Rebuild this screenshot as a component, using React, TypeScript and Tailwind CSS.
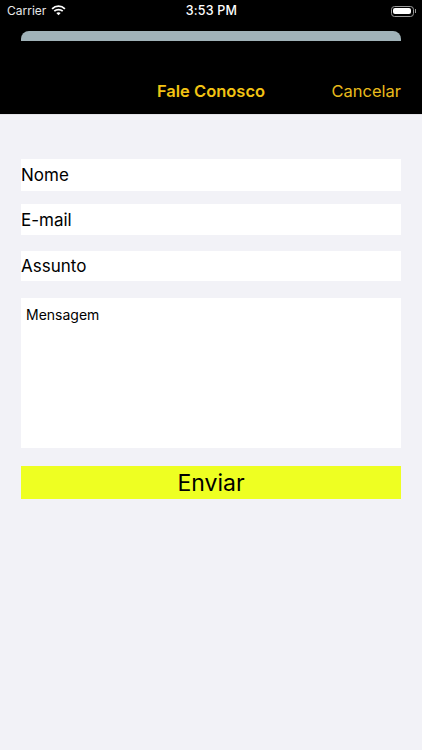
export default function App() {
  return (
    <div className="w-[422px] h-[750px] bg-[#f2f2f7] font-['Inter','Liberation_Sans',sans-serif] overflow-hidden">
      <header className="box-border bg-black h-[115px] flex flex-col border-b border-[#e4e4e8]">
        <div className="h-[22px] pl-[7px] pr-[6px] grid grid-cols-3 items-center text-white">
          <div className="flex items-center">
            <span className="text-[12px] leading-[14px] text-[#e8e8e8]">Carrier</span>
            <svg className="ml-[5px] mb-[1px]" width="15" height="11" viewBox="0 0 16 12" fill="none">
              <path d="M1 4.2C5 .4 11 .4 15 4.2" stroke="white" strokeWidth="1.9" />
              <path d="M3.4 6.8C6 4.4 10 4.4 12.6 6.8" stroke="white" strokeWidth="1.9" />
              <path d="M5.6 8.8 8 11.3l2.4-2.5C9 7.6 7 7.6 5.6 8.8Z" fill="white" />
            </svg>
          </div>
          <span className="text-center text-[12.5px] font-medium tracking-[0.2px] pt-[1px]">3:53 PM</span>
          <div className="flex items-center justify-end">
            <div className="box-border w-[23px] h-[11px] border border-[#9a9a9a] rounded-[3.5px] p-[1.5px]">
              <div className="w-full h-full bg-white rounded-[2px]" />
            </div>
            <div className="w-[1px] h-[4px] bg-[#9a9a9a] ml-[1px]" />
          </div>
        </div>
        <div className="mt-[9px] mx-[21px] h-[10px] bg-[#a0b2b8] rounded-t-[8px]" />
        <div className="flex-1 grid grid-cols-[1fr_auto_1fr] items-end pb-[13px] px-[21px] text-[16.5px] leading-[20px]">
          <span />
          <span className="text-center font-semibold text-[#f2c313]">Fale Conosco</span>
          <span className="text-right text-[#e9bb1c]">Cancelar</span>
        </div>
      </header>
      <main className="px-[21px] flex flex-col pt-[44px] text-black text-[17px]">
        <div className="h-[32px] bg-white flex items-center pt-[2px]">Nome</div>
        <div className="h-[31px] mt-[13px] bg-white flex items-center pt-[2px]">E-mail</div>
        <div className="h-[30px] mt-[16px] bg-white flex items-center pt-[2px]">Assunto</div>
        <div className="h-[150px] mt-[17px] bg-white px-[5px] pt-[7px] text-[14px] leading-[20px]">Mensagem</div>
        <div className="h-[33px] mt-[18px] bg-[#eeff22] flex items-center justify-center text-[23px] pt-[2px]">Enviar</div>
      </main>
    </div>
  );
}
